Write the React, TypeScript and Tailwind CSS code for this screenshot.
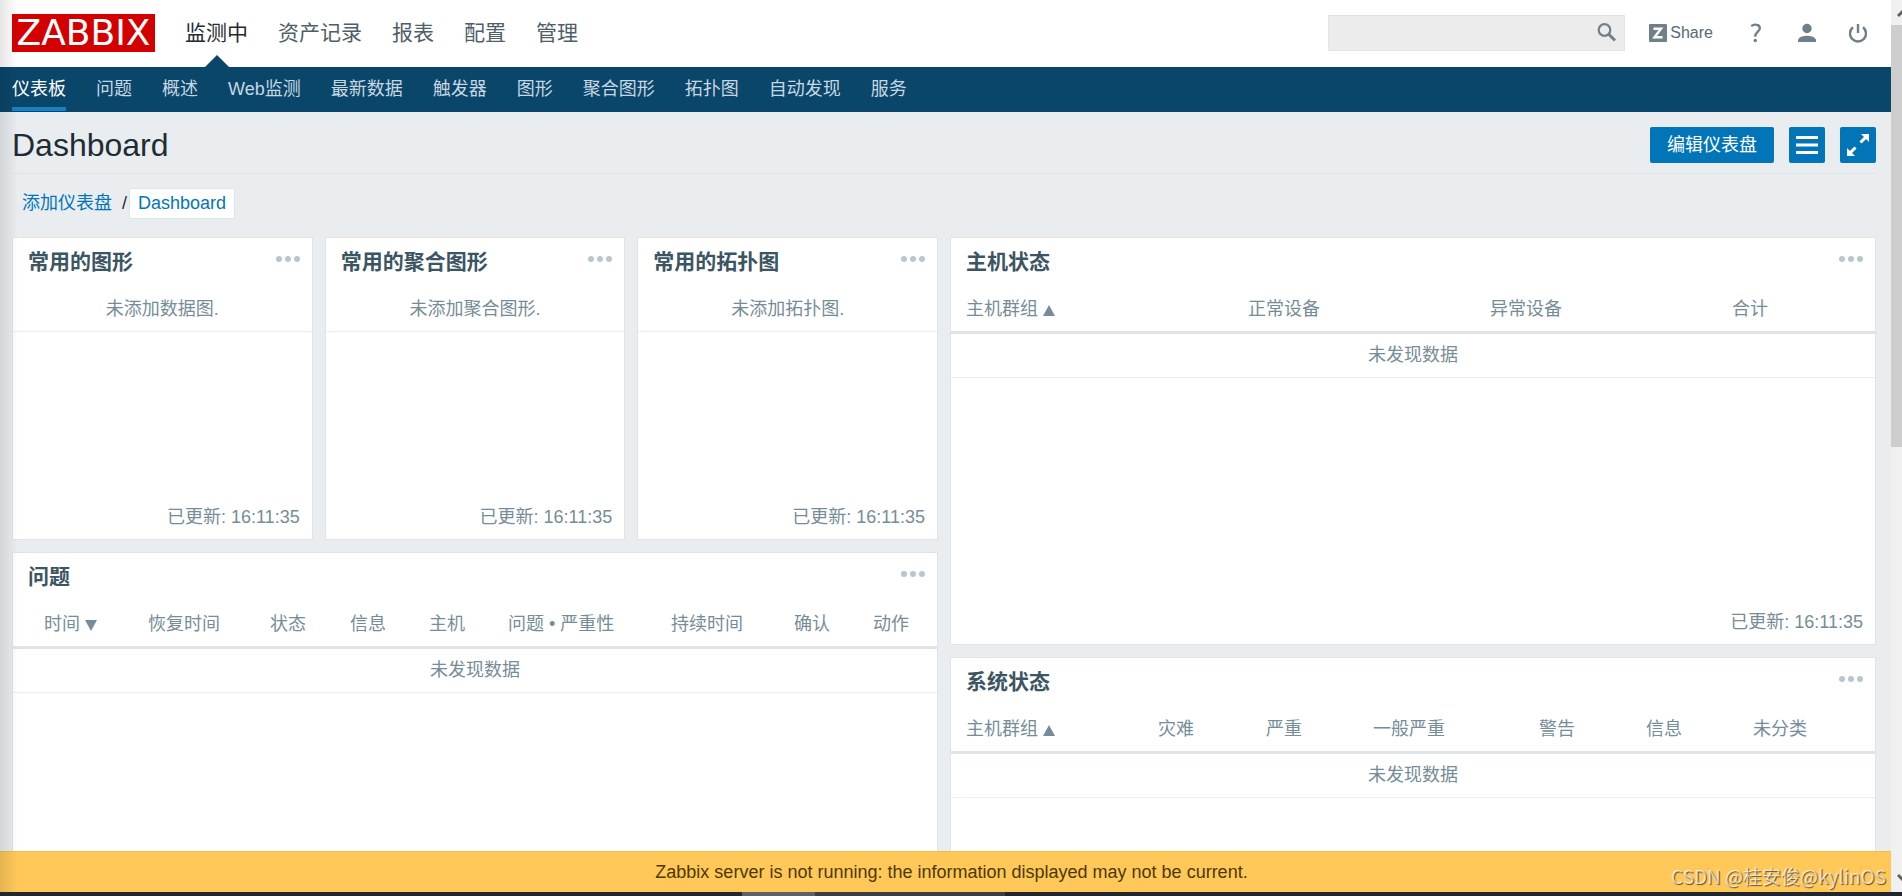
import type { ReactNode } from "react";

const mainMenu = ["监测中", "资产记录", "报表", "配置", "管理"];
const subMenu = ["仪表板", "问题", "概述", "Web监测", "最新数据", "触发器", "图形", "聚合图形", "拓扑图", "自动发现", "服务"];

type Column = { label: string; width: string; sort?: "asc" | "desc" };

const problemColumns: Column[] = [
  { label: "时间", width: "w-[120px] pl-[31px]", sort: "desc" },
  { label: "恢复时间", width: "w-[122px] pl-[15px]" },
  { label: "状态", width: "w-[80px] pl-[15px]" },
  { label: "信息", width: "w-[79px] pl-[15px]" },
  { label: "主机", width: "w-[79px] pl-[15px]" },
  { label: "问题 • 严重性", width: "w-[163px] pl-[15px]" },
  { label: "持续时间", width: "w-[123px] pl-[15px]" },
  { label: "确认", width: "w-[79px] pl-[15px]" },
  { label: "动作", width: "pl-[15px]" },
];

const hostColumns: Column[] = [
  { label: "主机群组", width: "w-[290px] pl-[15px]", sort: "asc" },
  { label: "正常设备", width: "w-[242px] pl-[7px]" },
  { label: "异常设备", width: "w-[242px] pl-[7px]" },
  { label: "合计", width: "pl-[7px]" },
];

const systemColumns: Column[] = [
  { label: "主机群组", width: "w-[200px] pl-[15px]", sort: "asc" },
  { label: "灾难", width: "w-[108px] pl-[7px]" },
  { label: "严重", width: "w-[107px] pl-[7px]" },
  { label: "一般严重", width: "w-[166px] pl-[7px]" },
  { label: "警告", width: "w-[107px] pl-[7px]" },
  { label: "信息", width: "w-[107px] pl-[7px]" },
  { label: "未分类", width: "pl-[7px]" },
];

function SortArrow({ direction }: { direction: "asc" | "desc" }) {
  return (
    <svg className="ml-[5px] inline-block h-3 w-3" viewBox="0 0 12 12" aria-hidden="true">
      <path d={direction === "asc" ? "M6 1 12 12H0z" : "M0 1h12L6 12z"} fill="#768d99" />
    </svg>
  );
}

function Widget({ title, className, updated, children }: { title: string; className: string; updated?: boolean; children: ReactNode }) {
  return (
    <section className={`flex flex-col border border-[#dfe4e7] bg-white ${className}`}>
      <header className="flex h-[52px] items-start justify-between pl-[15px] pr-3 pt-2.5">
        <h4 className="text-[21px] font-bold leading-7 text-[#3c5563]">{title}</h4>
        <button type="button" aria-label={`${title} 选项`} className="mt-[7px]">
          <svg className="h-2 w-6" viewBox="0 0 24 8" fill="#b8c6ce">
            <circle cx="3" cy="4" r="3" />
            <circle cx="12" cy="4" r="3" />
            <circle cx="21" cy="4" r="3" />
          </svg>
        </button>
      </header>
      {children}
      {updated && <footer className="mt-auto px-3 pb-2 text-right leading-7">已更新: 16:11:35</footer>}
    </section>
  );
}

function EmptyWidget({ title, text }: { title: string; text: string }) {
  return (
    <Widget title={title} className="h-[303px]" updated>
      <p className="h-[42px] border-b border-[#ebeef0] pt-[7px] text-center leading-6">{text}</p>
    </Widget>
  );
}

function DataTable({ columns }: { columns: Column[] }) {
  return (
    <table className="w-full table-fixed border-separate border-spacing-0 text-left">
      <thead>
        <tr>
          {columns.map((c) => (
            <th key={c.label} className={`h-[44px] whitespace-nowrap border-b-[3px] border-[#dfe4e7] pb-1 font-normal leading-6 ${c.width}`}>
              {c.label}
              {c.sort && <SortArrow direction={c.sort} />}
            </th>
          ))}
        </tr>
      </thead>
      <tbody>
        <tr>
          <td colSpan={columns.length} className="h-[44px] border-b border-[#ebeef0] pb-0.5 text-center leading-6">
            未发现数据
          </td>
        </tr>
      </tbody>
    </table>
  );
}

function Header() {
  return (
    <header className="flex h-[67px] items-center bg-white pb-0.5 pl-3 pr-6">
      <a href="#home" className="flex h-[38px] w-[143px] items-center justify-center bg-[#d40000] font-['DejaVu_Sans'] text-[36px] leading-none text-white">
        ZABBIX
      </a>
      <nav className="-mb-0.5 ml-[30px] flex gap-[30px] self-stretch pb-0.5 text-[21px]">
        {mainMenu.map((item, i) => (
          <a key={item} href="#menu" className={i === 0 ? "relative flex items-center text-[#1f2c33]" : "flex items-center text-[#4f5f68]"}>
            {item}
            {i === 0 && (
              <svg className="absolute -bottom-0.5 left-1/2 h-3 w-6 -translate-x-1/2" viewBox="0 0 24 12" aria-hidden="true">
                <path d="M12 0 24 12H0z" fill="#0a466a" />
              </svg>
            )}
          </a>
        ))}
      </nav>
      <form className="relative ml-auto h-9 w-[297px]">
        <input type="search" aria-label="搜索" className="h-full w-full border border-[#e3e4e5] bg-[#ececec] pl-2 pr-9 outline-none" />
        <button type="button" aria-label="搜索" className="absolute right-2 top-2">
          <svg className="h-5 w-5" viewBox="0 0 20 20" fill="none" stroke="#6f808a">
            <circle cx="7.500" cy="7" r="5.800" strokeWidth="2.200" />
            <path d="M11.500 11 18 17.500" strokeWidth="3" />
          </svg>
        </button>
      </form>
      <a href="#share" className="ml-6 flex items-center gap-[3px] text-base text-[#5a6971]">
        <span className="flex h-[18px] w-[18px] items-center justify-center rounded-[1px] bg-[#6f808a]">
          <svg className="h-3 w-3" viewBox="0 0 12 12" fill="none" stroke="#fff" strokeWidth="2.4" aria-hidden="true">
            <path d="M1.500 1.700h7.500L2.500 10.300h8" />
          </svg>
        </span>
        Share
      </a>
      <a href="#help" aria-label="帮助" className="ml-[37px]">
        <svg className="h-5 w-3" viewBox="0 0 12 20" fill="none" stroke="#6f808a" strokeWidth="2.4">
          <path d="M1.2 3.2C3 1.7 5 1.4 6.500 1.700c2 .3 3.300 1.700 3.300 3.500 0 3.500-4.500 3.800-4.500 7.800v.8" />
          <circle cx="5.300" cy="17.500" r="1.700" fill="#6f808a" stroke="none" />
        </svg>
      </a>
      <a href="#profile" aria-label="用户" className="ml-9">
        <svg className="h-5 w-[18px]" viewBox="0 0 18 20" fill="#6f808a">
          <circle cx="9" cy="5.500" r="4.700" />
          <path d="M0 19v-2.500C2 13.500 5.500 12.800 9 12.800s7 .7 9 3.700V19z" />
        </svg>
      </a>
      <a href="#logout" aria-label="退出" className="ml-[33px]">
        <svg className="h-5 w-[18px]" viewBox="0 0 18 20" fill="none" stroke="#6f808a" strokeWidth="2.400">
          <path d="M4 4.200a8 8 0 1 0 10 0M9 1v9" />
        </svg>
      </a>
    </header>
  );
}

function Scrollbar() {
  return (
    <div className="flex w-[11px] shrink-0 flex-col overflow-hidden bg-[#f0f0f0]" aria-hidden="true">
      <div className="flex h-[25px] shrink-0 items-center pl-1.5">
        <svg className="h-3 w-4 shrink-0" viewBox="0 0 16 12" fill="none" stroke="#606060" strokeWidth="3">
          <path d="M1 9 7 3l6 6" />
        </svg>
      </div>
      <div className="h-[422px] shrink-0 bg-[#cdcdcd]" />
      <div className="mt-auto flex h-[29px] shrink-0 items-center pl-1.5">
        <svg className="h-3 w-4 shrink-0" viewBox="0 0 16 12" fill="none" stroke="#606060" strokeWidth="3">
          <path d="M1 3l6 6 6-6" />
        </svg>
      </div>
    </div>
  );
}

export default function App() {
  return (
    <div className="relative flex h-screen flex-col overflow-hidden bg-[#e9edf0] font-['Liberation_Sans','Noto_Sans_CJK_SC',sans-serif] text-[18px] text-[#768d99]">
      <div className="flex min-h-0 flex-1">
        <div className="flex min-w-0 flex-1 flex-col">
          <Header />
          <nav className="flex h-[45px] shrink-0 gap-[30px] bg-[#0a466a] px-3">
            {subMenu.map((item, i) => (
              <a
                key={item}
                href="#section"
                className={
                  i === 0
                    ? "mb-px flex items-center border-b-4 border-[#1582c5] pt-1 text-white"
                    : "mb-px flex items-center border-b-4 border-transparent pt-1 text-[#c6d7e1]"
                }
              >
                {item}
              </a>
            ))}
          </nav>
          <main className="min-h-0 flex-1 overflow-hidden pl-3 pr-[15px]">
            <div className="flex h-[62px] items-center gap-[15px] border-b border-[#dfe4e7] pt-1">
              <h1 className="mr-auto text-[32px] font-normal text-[#1f2c33]">Dashboard</h1>
              <button type="button" className="h-9 rounded-xs bg-[#0275b8] px-[17px] pt-0.5 text-white">编辑仪表盘</button>
              <button type="button" aria-label="菜单" className="flex h-9 w-9 items-center justify-center rounded-xs bg-[#0275b8]">
                <svg className="h-5 w-[22px]" viewBox="0 0 22 20" stroke="#fff" strokeWidth="3">
                  <path d="M0 2.500h22M0 10h22M0 17.500h22" />
                </svg>
              </button>
              <button type="button" aria-label="全屏" className="flex h-9 w-9 items-center justify-center rounded-xs bg-[#0275b8]">
                <svg className="h-[22px] w-[22px]" viewBox="0 0 22 22" fill="#fff" stroke="#fff">
                  <path d="M14 0h8v8zM0 14v8h8z" stroke="none" />
                  <path d="M13.500 8.500 19 3M3 19l5.500-5.500" strokeWidth="3" />
                </svg>
              </button>
            </div>
            <nav className="flex h-[63px] items-center pb-1 pl-2.5 text-[#0275b8]">
              <a href="#all">添加仪表盘</a>
              <span className="ml-2.5 mr-0.5 text-[#1f2c33]">/</span>
              <a href="#dashboard" className="flex h-[31px] items-center rounded-xs border border-[#dfe4e7] bg-white px-2">Dashboard</a>
            </nav>
            <div className="grid grid-cols-2 gap-3">
              <div className="flex flex-col gap-3">
                <div className="grid grid-cols-3 gap-3">
                  <EmptyWidget title="常用的图形" text="未添加数据图." />
                  <EmptyWidget title="常用的聚合图形" text="未添加聚合图形." />
                  <EmptyWidget title="常用的拓扑图" text="未添加拓扑图." />
                </div>
                <Widget title="问题" className="h-[408px]">
                  <DataTable columns={problemColumns} />
                </Widget>
              </div>
              <div className="flex flex-col gap-3">
                <Widget title="主机状态" className="h-[408px]" updated>
                  <DataTable columns={hostColumns} />
                </Widget>
                <Widget title="系统状态" className="h-[303px]">
                  <DataTable columns={systemColumns} />
                </Widget>
              </div>
            </div>
          </main>
          <output className="flex h-[41px] shrink-0 items-center justify-center border-t border-[#f2bc4d] bg-[#ffc859] pl-3 text-[#4d3800]">
            Zabbix server is not running: the information displayed may not be current.
          </output>
        </div>
        <Scrollbar />
      </div>
      <div className="flex h-1 shrink-0 bg-[#22272f]">
        <div className="ml-[39%] w-[73px] bg-[#5d6064]" />
        <div className="w-[10%] bg-[#3a3d42]" />
      </div>
      <div className="pointer-events-none absolute bottom-1 left-0 top-0 w-[18px] bg-linear-to-r from-black/10 to-transparent" />
      <p className="pointer-events-none absolute bottom-1.5 right-4 font-['Noto_Sans_CJK_SC',sans-serif] text-[19px] leading-7 text-white/70 [text-shadow:1px_1px_1px_rgba(0,0,0,0.6)]">CSDN @桂安俊@kylinOS</p>
    </div>
  );
}
